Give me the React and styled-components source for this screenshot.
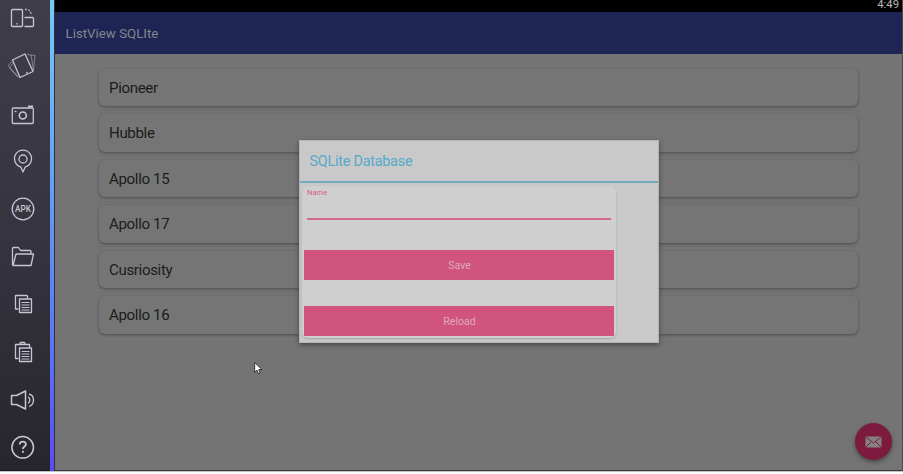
import React from "react";
import styled, { createGlobalStyle } from "styled-components";

const GlobalStyle = createGlobalStyle`
  * { box-sizing: border-box; }
  body { margin: 0; background: #fff; font-family: Roboto, sans-serif; overflow: hidden; }
`;

const Emulator = styled.div`
  position: relative;
  display: flex;
  width: 903px;
  height: 472px;
  border-bottom: 1px solid #c4c4c4;
`;

const Sidebar = styled.nav`
  display: grid;
  grid-template-rows: 40px 51px 47px 46px 50px 46px 49px 47px 47px 48px;
  width: 50px;
  flex: none;
  background: linear-gradient(#3f3e48, #36353f 50%, #27262f);
  border-bottom: 1px solid #18181f;
`;

const ToolButton = styled.button`
  display: grid;
  place-items: center;
  width: 46px;
  padding: 0;
  border: 0;
  background: none;
  color: #c6c5d0;
  svg { display: block; overflow: visible; }
`;

const Accent = styled.div`
  width: 4px;
  flex: none;
  background: linear-gradient(#77c8f4, #649ef6 40%, #5b7af5 70%, #5b4df2);
`;

const Screen = styled.main`
  display: flex;
  flex-direction: column;
  flex: 1;
  border-left: 1px solid #303038;
  border-right: 1px solid #4b4b4b;
  border-bottom: 1px solid #383838;
  background: #747474;
`;

const StatusBar = styled.header`
  height: 12px;
  flex: none;
  padding-right: 3px;
  background: #000;
  color: #b9b9b9;
  font-size: 11.3px;
  line-height: 9px;
  text-align: right;
`;

const AppBar = styled.div`
  height: 42px;
  flex: none;
  padding-left: 10.5px;
  background: #1e2554;
  color: #83858d;
  font-size: 13.3px;
  line-height: 43px;
`;

const CardList = styled.ul`
  margin: 0;
  padding: 14.5px 44px 0 42px;
  list-style: none;
`;

const CardRow = styled.li`
  height: 45.5px;
  padding-left: 2px;
  background: linear-gradient(#6f6f6f, #6f6f6f) 0 41px / 100% 1px no-repeat;
  &:last-child { background: none; }
`;

const Card = styled.div`
  height: 37.5px;
  padding-left: 10px;
  border-radius: 6px;
  background: #757575;
  box-shadow: 0 1px 3px 0 rgba(0, 0, 0, 0.36);
  color: #1c1c1c;
  font-size: 15.1px;
  letter-spacing: -0.36px;
  line-height: 39.8px;
`;

const Dialog = styled.section`
  position: absolute;
  left: 299px;
  top: 139.5px;
  width: 359.5px;
  height: 203px;
  border: 1px solid #b4b4b4;
  background: rgba(210, 210, 210, 0.91);
  box-shadow: 0 2px 5px rgba(0, 0, 0, 0.38);
`;

const DialogTitle = styled.h1`
  height: 42px;
  margin: 0;
  padding-left: 9.5px;
  border-bottom: 2px solid #73aabd;
  color: #55a9ca;
  font-size: 14.4px;
  font-weight: 400;
  letter-spacing: -0.24px;
  line-height: 42px;
`;

const Form = styled.form`
  display: flex;
  flex-direction: column;
  width: 314px;
  height: 151.5px;
  margin: 3.5px 0 0 2px;
  padding: 0 2px;
  border-radius: 6px;
  background: rgba(214, 214, 214, 0.5);
  box-shadow: 0 1px 2px rgba(0, 0, 0, 0.18);
`;

const Field = styled.label`
  height: 34px;
  flex: none;
  margin: 0 3px 30px;
  border-bottom: 2px solid #d2688f;
  color: #d75b86;
  font-size: 7.6px;
  line-height: 14px;
`;

const Submit = styled.button`
  height: 30px;
  width: 310px;
  flex: none;
  margin: 0 0 26px;
  padding: 1px 0 0 1px;
  border: 0;
  background: #d0547e;
  color: #dda9bd;
  font-family: inherit;
  font-size: 10.6px;
  &:last-child { margin-bottom: 0; }
`;

const Fab = styled.button`
  position: absolute;
  left: 855px;
  top: 423px;
  display: grid;
  place-items: center;
  width: 37px;
  height: 37px;
  padding: 0;
  border: 0;
  border-radius: 50%;
  background: #7c1b3d;
  box-shadow: 0 2px 4px rgba(0, 0, 0, 0.4);
`;

const Cursor = styled.svg`
  position: absolute;
  left: 254px;
  top: 362px;
`;

const Glyph = ({ children, w = 28, h = 28 }) => (
  <svg width={w} height={h} viewBox={`0 0 ${w} ${h}`} fill="none" stroke="currentColor" strokeWidth="1.3" strokeLinejoin="round">
    {children}
  </svg>
);

const tools = [
  ["Rotate", <><rect x="2.5" y="3.5" width="11" height="17" rx="1" /><path d="M15.5 11.5h8a1 1 0 0 1 1 1v7a1 1 0 0 1-1 1h-8" /><path d="M16 3.5h2c2 0 4 2 4.5 6" strokeDasharray="1.7 1.6" /><path d="M8 17v1.5" /></>],
  ["Shake", <><path d="m3.5 8 12.500-6 8 17.500-13 6z" /><path d="M3.600 9-1 13.500l11 12M3.500 11.500.500 16l8 9M18 2.500l4 .5 2.500 15" strokeWidth=".8" opacity=".65" /><path d="m22 3 4 .5-1.500 15" strokeWidth=".8" opacity=".6" /><path d="m17 21 1.500-.6" /></>],
  ["Camera", <><rect x="3.3" y="7" width="21" height="15.5" rx="1" /><path d="M19 5.5h5" strokeWidth="2" /><circle cx="13.8" cy="14.5" r="3.5" strokeWidth="1.6" /><path d="M5.5 10.5h2" /></>],
  ["Location", <><path d="M14 25 11.7 19.8a8.5 8.5 0 1 1 4.6 0z" /><circle cx="14" cy="12" r="4" /></>],
  ["Install APK", <><circle cx="14" cy="14" r="10.800" /><text x="14" y="17" textAnchor="middle" fill="currentColor" stroke="none" fontFamily="Roboto" fontSize="8.2" fontWeight="500">APK</text></>],
  ["Folder", <><path d="M3.5 22V5.500a1 1 0 0 1 1-1h5l2 3h9.500a1 1 0 0 1 1 1v2.500" /><path d="M4 22.500 7 11h17.500l-2.500 11.500z" /></>],
  ["Copy", <><path d="M9.5 18H6.5V4.500h11a1 1 0 0 1 1 1v2" /><path d="M10.500 8h12v13.500h-12z" /><path d="M12.500 11.500h8M12.500 14h8M12.500 16.500h8M12.500 19h8" strokeWidth="1" /></>],
  ["Paste", <><path d="M9.500 19.500h-3V5.500h4l1-2h4l1 2h4V9M9.500 5.500h8" /><path d="M10.500 9h12v13.500h-12z" /><path d="M12.500 12.500h8M12.500 15h8M12.500 17.500h8M12.500 20h8" strokeWidth="1" /></>],
  ["Volume", <><path d="M2.500 9.500h5L16.500 5v18L7.500 18.500h-5z" strokeWidth="1.5" /><path d="M19 11c2.500 1 2.500 5 0 6.500M20 8c6 1.500 6 10.500 0 12.500" /></>],
  ["Help", <><circle cx="13.7" cy="14.3" r="10.8" strokeWidth="1.5" /><path d="M10.700 11.600c0-4 6.200-3.800 6.200-.3 0 2.300-3 2.100-3 4.700M13.900 17.800v2" strokeWidth="1.8" /></>],
];

const missions = ["Pioneer", "Hubble", "Apollo 15", "Apollo 17", "Cusriosity", "Apollo 16"];

export default function App() {
  return (
    <>
      <GlobalStyle />
      <Emulator>
        <Sidebar>
          {tools.map(([label, drawing]) => (
            <ToolButton key={label} aria-label={label}><Glyph>{drawing}</Glyph></ToolButton>
          ))}
        </Sidebar>
        <Accent />
        <Screen>
          <StatusBar>4:49</StatusBar>
          <AppBar>ListView SQLIte</AppBar>
          <CardList>
            {missions.map((name) => <CardRow key={name}><Card>{name}</Card></CardRow>)}
          </CardList>
        </Screen>
        <Dialog>
          <DialogTitle>SQLite Database</DialogTitle>
          <Form>
            <Field>Name</Field>
            <Submit type="button">Save</Submit>
            <Submit type="button">Reload</Submit>
          </Form>
        </Dialog>
        <Fab aria-label="Message">
          <svg width="17" height="12" viewBox="0 0 17 12">
            <rect x=".5" y=".5" width="16" height="11" rx="1" fill="#858081" />
            <path d="m1 1 7.500 6L16 1M1 11l5-5M16 11l-5-5" fill="none" stroke="#7c1b3d" strokeWidth="1" />
          </svg>
        </Fab>
        <Cursor width="9" height="13" viewBox="0 0 9 13">
          <path d="M.7.6v9.700L3 8.200l1.600 3.600 1.700-.8-1.600-3.400H8z" fill="#fff" stroke="#15151c" strokeWidth=".8" />
        </Cursor>
      </Emulator>
    </>
  );
}
